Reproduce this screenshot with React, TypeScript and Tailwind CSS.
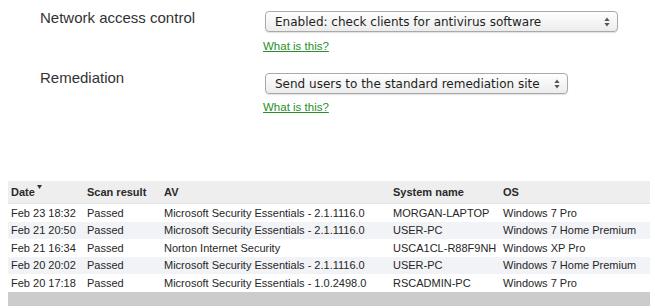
import React from "react";

const rows = [
  ["Feb 23 18:32", "Passed", "Microsoft Security Essentials - 2.1.1116.0", "MORGAN-LAPTOP", "Windows 7 Pro"],
  ["Feb 21 20:50", "Passed", "Microsoft Security Essentials - 2.1.1116.0", "USER-PC", "Windows 7 Home Premium"],
  ["Feb 21 16:34", "Passed", "Norton Internet Security", "USCA1CL-R88F9NH", "Windows XP Pro"],
  ["Feb 20 20:02", "Passed", "Microsoft Security Essentials - 2.1.1116.0", "USER-PC", "Windows 7 Home Premium"],
  ["Feb 20 17:18", "Passed", "Microsoft Security Essentials - 1.0.2498.0", "RSCADMIN-PC", "Windows 7 Pro"],
];

function Arrows() {
  return (
    <svg width="6" height="10" viewBox="0 0 6 10" className="shrink-0">
      <path d="M3 0.5 L5.6 4 L0.4 4 Z" fill="#555" />
      <path d="M3 9.5 L5.6 6 L0.4 6 Z" fill="#555" />
    </svg>
  );
}

function Select({ text, width }: { text: string; width: string }) {
  return (
    <div
      className={`${width} h-[21px] flex items-center justify-between pl-[9px] pr-[7px] rounded-[4px] border border-[#a9a9a9] bg-gradient-to-b from-[#ffffff] to-[#ececec] shadow-[0_1px_1px_rgba(0,0,0,0.12)] text-[12px] text-[#1e1e1e]`}
      style={{ fontFamily: '"DejaVu Sans", sans-serif' }}
    >
      <span>{text}</span>
      <Arrows />
    </div>
  );
}

function Link({ mt }: { mt: string }) {
  return (
    <div className={`${mt} text-[11.5px] leading-[14px] -ml-[2px]`} style={{ fontFamily: '"Liberation Sans", Arial, sans-serif' }}>
      <span className="text-[#26912a] underline decoration-[#26912a]">What is this?</span>
    </div>
  );
}

export default function App() {
  return (
    <div className="w-[655px] h-[308px] bg-white overflow-hidden" style={{ fontFamily: '"Liberation Sans", Arial, sans-serif' }}>
      <div className="pl-[40px] pt-[9px]">
        <div className="flex">
          <div className="w-[225px] text-[15px] leading-[18px] text-[#333]">Network access control</div>
          <div className="flex flex-col pt-[2px]">
            <Select text="Enabled: check clients for antivirus software" width="w-[353px]" />
            <Link mt="mt-[7px]" />
          </div>
        </div>
        <div className="flex mt-[16px]">
          <div className="w-[225px] text-[15px] leading-[18px] text-[#333]">Remediation</div>
          <div className="flex flex-col pt-[4px]">
            <Select text="Send users to the standard remediation site" width="w-[303px]" />
            <Link mt="mt-[6px]" />
          </div>
        </div>
      </div>

      <div className="ml-[8px] w-[642px] mt-[67px] text-[11px] text-[#262626]">
        <div className="grid grid-cols-[76px_77px_229px_110px_1fr] pl-[3px] h-[23px] items-center bg-[#eeeeee] border-b border-[#e2e2e2] font-bold text-[#2a2a2a]">
          <div className="flex items-start">
            Date
            <svg width="5" height="4" viewBox="0 0 5 4" className="ml-[2px] mt-[1px]">
              <path d="M0 0 L5 0 L2.5 4 Z" fill="#333" />
            </svg>
          </div>
          <div>Scan result</div>
          <div>AV</div>
          <div>System name</div>
          <div>OS</div>
        </div>
        {rows.map((r, i) => (
          <div
            key={i}
            className={`grid grid-cols-[76px_77px_229px_110px_1fr] pl-[3px] h-[17.6px] items-center ${i % 2 === 1 ? "bg-[#f1f3f6]" : "bg-white"}`}
          >
            {r.map((c, j) => (
              <div key={j} className="whitespace-nowrap">{c}</div>
            ))}
          </div>
        ))}
        <div className="h-[14px] bg-[#cccccc]" />
      </div>
    </div>
  );
}
